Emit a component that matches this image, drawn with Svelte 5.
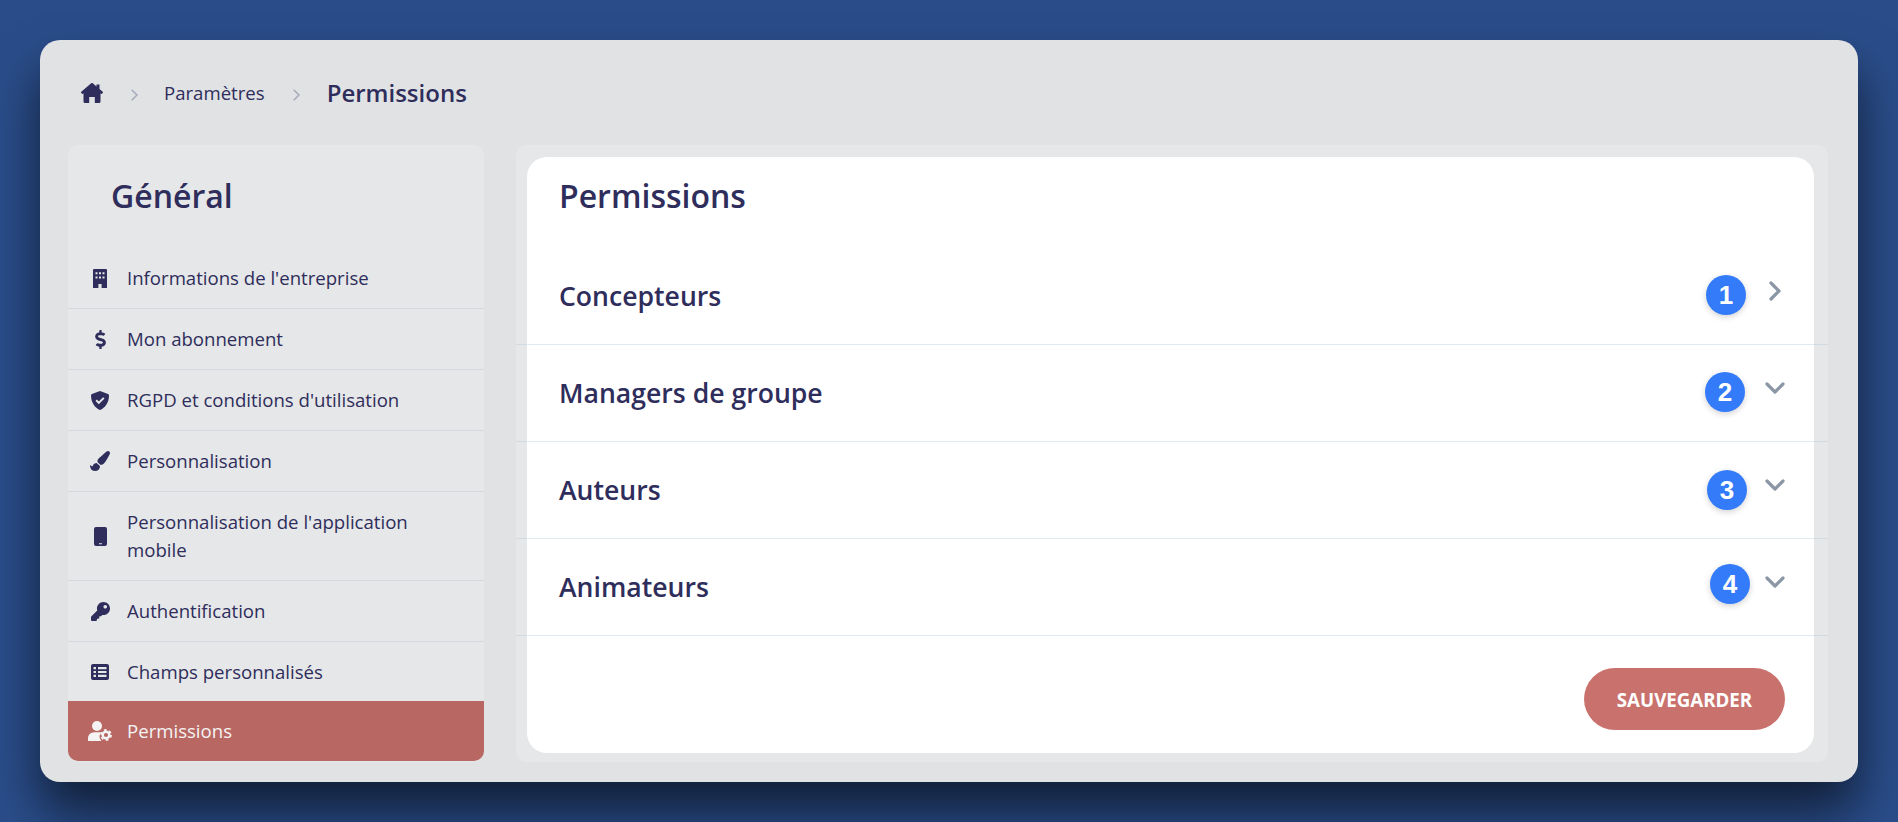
<script>
  const menu = [
    { label: 'Informations de l\'entreprise', icon: 'building' },
    { label: 'Mon abonnement', icon: 'dollar' },
    { label: 'RGPD et conditions d\'utilisation', icon: 'shield' },
    { label: 'Personnalisation', icon: 'brush' },
    { label: 'Personnalisation de l\'application mobile', icon: 'mobile' },
    { label: 'Authentification', icon: 'key' },
    { label: 'Champs personnalisés', icon: 'table' },
    { label: 'Permissions', icon: 'usercog', active: true }
  ];

  // badgeRight: the numbered markers are not lined up in the reference
  const groups = [
    { label: 'Concepteurs', open: false, badge: 1, badgeRight: 82, badgeTop: 27 },
    { label: 'Managers de groupe', open: true, badge: 2, badgeRight: 83, badgeTop: 27 },
    { label: 'Auteurs', open: true, badge: 3, badgeRight: 81, badgeTop: 28 },
    { label: 'Animateurs', open: true, badge: 4, badgeRight: 78, badgeTop: 25 }
  ];
</script>

<div class="page">
  <div class="window">
    <nav class="breadcrumb">
      <svg class="home" viewBox="0 0 22 20"><path fill-rule="evenodd" d="M11 0c.3 0 .6.1.8.3L15.500 3.400V1.500h3v4.400l3.200 2.800c.4.400.4 1 0 1.300l-.5.600c-.4.400-.9.400-1.200.100l-.5-.4v8.200c0 .8-.6 1.500-1.400 1.500h-4.300v-6h-5.600v6H3.900c-.8 0-1.400-.7-1.400-1.500v-8.200l-.5.400c-.3.300-.8.300-1.200-.100l-.5-.6c-.4-.300-.4-.9 0-1.300L10.200.300c.2-.2.500-.3.800-.3z" /></svg>
      <svg class="sep" viewBox="0 0 7 12"><path d="M.7.700L6 6 .7 11.300" /></svg>
      <span class="crumb">Paramètres</span>
      <svg class="sep last" viewBox="0 0 7 12"><path d="M.7.700L6 6 .7 11.300" /></svg>
      <span class="crumb current">Permissions</span>
    </nav>

    <div class="columns">
      <aside class="sidebar">
        <h2>Général</h2>
        <ul>
          {#each menu as item}
            <li class="item" class:active={item.active}>
              <span class="icon">
                {#if item.icon === 'building'}
                  <svg width="14" height="19" viewBox="0 0 14 19"><path fill-rule="evenodd" d="M1 0h12a1 1 0 0 1 1 1v18H8.600v-4H5.400v4H0V1a1 1 0 0 1 1-1zM2.500 3.200v2h2v-2zm3.500 0v2h2v-2zm3.500 0v2h2v-2zM2.500 7.400v2h2v-2zm3.500 0v2h2v-2zm3.500 0v2h2v-2z" /></svg>
                {:else if item.icon === 'dollar'}
                  <svg width="11" height="19" viewBox="0 0 288 512"><path d="M209.2 233.4l-108-31.6C88.7 198.2 80 186.5 80 173.5c0-16.3 13.2-29.5 29.5-29.5h66.3c12.2 0 24.2 3.7 34.2 10.5 6.1 4.1 14.3 3.1 19.5-2l34.8-34c7.1-6.9 6.1-18.4-1.8-24.5C238 74.8 207.4 64.1 176 64V16c0-8.8-7.2-16-16-16h-32c-8.8 0-16 7.2-16 16v48h-2.5C45.8 64-5.4 118.7.5 183.6c4.2 46.1 39.4 83.6 83.8 96.6l102.5 30c12.5 3.7 21.2 15.3 21.2 28.3 0 16.3-13.2 29.5-29.5 29.5h-66.3C100 368 88 364.3 78 357.5c-6.1-4.1-14.3-3.1-19.5 2l-34.8 34c-7.1 6.9-6.1 18.4 1.8 24.5 24.5 19.2 55.1 29.900 86.5 30v48c0 8.800 7.200 16 16 16h32c8.800 0 16-7.200 16-16v-48.200c46.600-.900 90.300-28.600 105.700-72.700 21.500-61.600-14.600-124.800-72.500-141.700z" /></svg>
                {:else if item.icon === 'shield'}
                  <svg width="18" height="19" viewBox="0 0 18 19"><path d="M9 0l8 3c.7.3 1 .8 1 1.500C18 12 13.500 17 9.600 18.800a1.500 1.500 0 0 1-1.200 0C4.500 17 0 12 0 4.500 0 3.800.3 3.300 1 3z" /><path class="tick" d="M5.200 9.300l2.600 2.600 5-5" /></svg>
                {:else if item.icon === 'brush'}
                  <svg width="20" height="20" viewBox="0 0 512 512"><path d="M167.020 309.340c-40.120 2.580-76.530 17.860-97.190 72.300-2.350 6.210-8 9.980-14.590 9.980-11.110 0-45.460-27.670-55.250-34.350C0 439.620 37.930 512 128 512c75.860 0 128-43.770 128-120.190 0-3.110-.650-6.080-.970-9.130l-88.010-73.340zM457.890 0c-15.160 0-29.370 6.710-40.210 16.450C213.270 199.050 192 203.340 192 257.090c0 13.700 3.250 26.760 8.730 38.700l63.820 53.180c7.210 1.800 14.640 3.030 22.390 3.030 62.110 0 98.110-45.470 211.160-256.460 7.380-14.350 13.900-29.850 13.900-45.990C512 20.640 486 0 457.890 0z" /></svg>
                {:else if item.icon === 'mobile'}
                  <svg width="13" height="19" viewBox="0 0 13 19"><path fill-rule="evenodd" d="M2 0h9a2 2 0 0 1 2 2v15a2 2 0 0 1-2 2H2a2 2 0 0 1-2-2V2a2 2 0 0 1 2-2zM5 16.200v1h3v-1z" /></svg>
                {:else if item.icon === 'key'}
                  <svg width="19" height="19" viewBox="0 0 512 512"><path d="M512 176.001C512 273.203 433.202 352 336 352c-11.220 0-22.190-1.062-32.827-3.069l-24.012 27.014A23.999 23.999 0 0 1 261.223 384H224v40c0 13.255-10.745 24-24 24h-40v40c0 13.255-10.745 24-24 24H24c-13.255 0-24-10.745-24-24v-78.059c0-6.365 2.529-12.470 7.029-16.971l161.802-161.802C163.108 213.814 160 195.271 160 176 160 78.798 238.797.001 335.999 0 433.488-.001 512 78.511 512 176.001zM336 128c0 26.510 21.490 48 48 48s48-21.490 48-48-21.490-48-48-48-48 21.490-48 48z" /></svg>
                {:else if item.icon === 'table'}
                  <svg width="18" height="16" viewBox="0 0 18 16"><path fill-rule="evenodd" d="M2 0h14a2 2 0 0 1 2 2v12a2 2 0 0 1-2 2H2a2 2 0 0 1-2-2V2a2 2 0 0 1 2-2zM2.500 3v2.200h2.500V3zm4.500 0v2.200h8.500V3zM2.500 6.900v2.200h2.500V6.900zm4.500 0v2.200h8.500V6.900zM2.500 10.800V13h2.500v-2.200zm4.500 0V13h8.500v-2.200z" /></svg>
                {:else}
                  <svg width="24" height="20" viewBox="0 0 24 20"><circle cx="9" cy="5" r="5" /><path d="M0 20v-2.500C0 14 2.800 11.200 6 11.200h5.500c.6 0 1.100.1 1.600.2a6.800 6.800 0 0 0 .4 8.600z" /><circle class="gear" cx="18" cy="14" r="3.300" /><circle class="gear-teeth" cx="18" cy="14" r="5" /></svg>
                {/if}
              </span>
              <span class="label">{item.label}</span>
            </li>
          {/each}
        </ul>
      </aside>

      <main class="panel">
        <section class="card">
          <h1>Permissions</h1>
          {#each groups as group}
            <div class="row">
              <span class="row-label">{group.label}</span>
              <span class="badge" style="right: {group.badgeRight}px; top: {group.badgeTop}px">{group.badge}</span>
              <svg class="chevron" class:open={group.open} viewBox="0 0 12 20"><path d="M2 2l8 8-8 8" /></svg>
            </div>
          {/each}
          <div class="actions">
            <button>SAUVEGARDER</button>
          </div>
        </section>
      </main>
    </div>
  </div>
</div>

<style>
  :global(body) {
    margin: 0;
    background: #2a4d8a;
    overflow: hidden;
  }

  .page {
    height: 100vh;
    box-sizing: border-box;
    padding: 40px;
    font-family: "Open Sans", sans-serif;
    color: #2e2d5b;
  }

  .window {
    height: 100%;
    box-sizing: border-box;
    display: flex;
    flex-direction: column;
    padding: 0 30px 20px 28px;
    background: #e1e2e4;
    border-radius: 20px;
    box-shadow: 0 30px 50px rgba(0, 0, 0, 0.6);
  }

  .breadcrumb {
    height: 105px;
    flex: none;
    display: flex;
    align-items: center;
    padding-left: 13px;
  }

  .home {
    width: 22px;
    height: 20px;
    fill: #2e2d5b;
  }

  .sep {
    width: 7px;
    height: 12px;
    margin: 4px 26px 0 28px;
    fill: none;
    stroke: #a3a9b8;
    stroke-width: 1.500;
  }

  .sep.last {
    margin-right: 27px;
  }

  .crumb {
    font-size: 18.600px;
  }

  .current {
    font-size: 24px;
    font-weight: 600;
  }

  .columns {
    flex: 1;
    display: flex;
    gap: 32px;
    min-height: 0;
  }

  .sidebar {
    width: 416px;
    flex: none;
    background: #e6e7e8;
    border-radius: 10px;
  }

  .sidebar h2 {
    margin: 0;
    height: 103px;
    padding: 31px 0 0 43px;
    box-sizing: border-box;
    font-size: 32px;
    line-height: 40px;
    font-weight: 600;
  }

  .sidebar ul {
    list-style: none;
    margin: 0;
    padding: 0;
  }

  .item {
    display: flex;
    align-items: center;
    padding: 16px 40px 16px 0;
    font-size: 18.600px;
    line-height: 28px;
    border-bottom: 1px solid #d3d9de;
  }

  .item:nth-last-child(-n + 2) {
    border-bottom: none;
  }

  .item.active {
    margin-top: -1px;
    background: #b86763;
    color: #f4f4f4;
    border-radius: 0 0 10px 10px;
  }

  .icon {
    width: 59px;
    box-sizing: border-box;
    padding-left: 5px;
    flex: none;
    display: flex;
    justify-content: center;
  }

  .icon svg {
    fill: currentColor;
    display: block;
  }

  .tick {
    fill: none;
    stroke: #e6e7e8;
    stroke-width: 2;
  }

  .gear {
    fill: none;
    stroke: currentColor;
    stroke-width: 2.400;
  }

  .gear-teeth {
    fill: none;
    stroke: currentColor;
    stroke-width: 1.800;
    stroke-dasharray: 2.600 2.630;
  }

  .panel {
    flex: 1;
    display: flex;
    padding: 12px 14px 9px 11px;
    background: #e6e7e8;
    border-radius: 10px;
    min-width: 0;
  }

  .card {
    flex: 1;
    display: flex;
    flex-direction: column;
    background: #fff;
    border-radius: 20px;
  }

  .card h1 {
    margin: 0;
    height: 91px;
    padding: 19px 0 0 32px;
    box-sizing: border-box;
    font-size: 32px;
    line-height: 40px;
    font-weight: 600;
  }

  .row {
    position: relative;
    height: 97px;
    box-sizing: border-box;
    margin: 0 -14px 0 -11px;
    padding: 0 47px 0 43px;
    display: flex;
    align-items: center;
    justify-content: space-between;
    border-bottom: 1px solid rgba(170, 195, 210, 0.35);
  }

  .row-label {
    font-size: 26.600px;
    font-weight: 600;
  }

  .badge {
    position: absolute;
    width: 40px;
    height: 40px;
    border-radius: 50%;
    display: flex;
    align-items: center;
    justify-content: center;
    background: #347bf9;
    color: #fff;
    font-family: "Liberation Sans", sans-serif;
    font-size: 26px;
    font-weight: 700;
    box-shadow: 0 2px 6px rgba(0, 0, 0, 0.18);
  }

  .chevron {
    width: 12px;
    height: 20px;
    margin-top: -10px;
    fill: none;
    stroke: #8c97a6;
    stroke-width: 3.200;
    stroke-linecap: round;
    stroke-linejoin: round;
  }

  .chevron.open {
    transform: rotate(90deg);
  }

  .actions {
    display: flex;
    justify-content: flex-end;
    padding: 32px 29px 0 0;
  }

  button {
    width: 201px;
    height: 62px;
    border: none;
    border-radius: 31px;
    background: #c9726d;
    color: #fff;
    font-family: "Open Sans", sans-serif;
    font-size: 18.700px;
    font-weight: 700;
  }
</style>
